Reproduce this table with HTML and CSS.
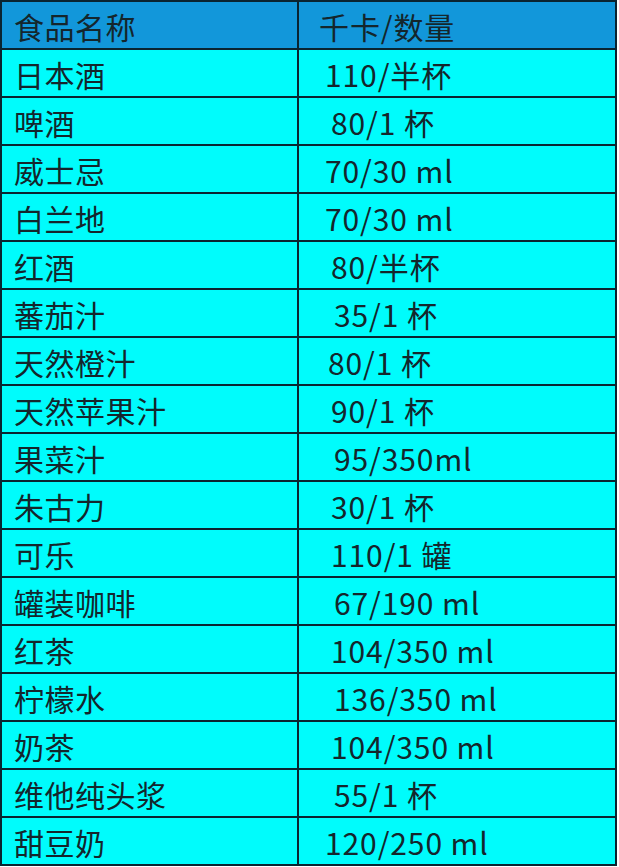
FILE: index.html
```html
<!DOCTYPE html>
<html lang="zh-CN">
<head>
<meta charset="utf-8">
<title>饮品热量表</title>
<link rel="stylesheet" href="styles.css">
</head>
<body>
<div class="table">
  <div class="cell head name">食品名称</div><div class="cell head val h">千卡/数量</div>
  <div class="cell name">日本酒</div><div class="cell val a">110/半杯</div>
  <div class="cell name">啤酒</div><div class="cell val b">80/1 杯</div>
  <div class="cell name">威士忌</div><div class="cell val a">70/30 ml</div>
  <div class="cell name">白兰地</div><div class="cell val a">70/30 ml</div>
  <div class="cell name">红酒</div><div class="cell val b">80/半杯</div>
  <div class="cell name">蕃茄汁</div><div class="cell val c">35/1 杯</div>
  <div class="cell name">天然橙汁</div><div class="cell val m">80/1 杯</div>
  <div class="cell name">天然苹果汁</div><div class="cell val b">90/1 杯</div>
  <div class="cell name">果菜汁</div><div class="cell val c">95/350ml</div>
  <div class="cell name">朱古力</div><div class="cell val b">30/1 杯</div>
  <div class="cell name">可乐</div><div class="cell val b">110/1 罐</div>
  <div class="cell name">罐装咖啡</div><div class="cell val c">67/190 ml</div>
  <div class="cell name">红茶</div><div class="cell val b">104/350 ml</div>
  <div class="cell name">柠檬水</div><div class="cell val c">136/350 ml</div>
  <div class="cell name">奶茶</div><div class="cell val b">104/350 ml</div>
  <div class="cell name">维他纯头浆</div><div class="cell val c">55/1 杯</div>
  <div class="cell name">甜豆奶</div><div class="cell val a">120/250 ml</div>
</div>
</body>
</html>
```
FILE: styles.css
```css
html, body {
  margin: 0;
  padding: 0;
  background: #ffffff;
}
body {
  font-family: "Noto Sans CJK SC", "Noto Sans", sans-serif;
  color: #14262c;
}
.table {
  width: 617px;
  box-sizing: border-box;
  padding: 2px;
  background: #0a2430;
  display: grid;
  grid-template-columns: 295px 316px;
  grid-auto-rows: 46px;
  gap: 2px;
}
.cell {
  background: #00fcfc;
  font-size: 30px;
  line-height: 41px;
  padding-top: 4px;
  white-space: nowrap;
  overflow: hidden;
}
.cell.head {
  background: #1297da;
}
.name {
  padding-left: 12px;
  letter-spacing: 0.5px;
}
.val { letter-spacing: 0.9px; }
.val.h { padding-left: 20px; }
.val.a { padding-left: 26px; }
.val.m { padding-left: 29px; }
.val.b { padding-left: 32px; }
.val.c { padding-left: 35px; }
```
